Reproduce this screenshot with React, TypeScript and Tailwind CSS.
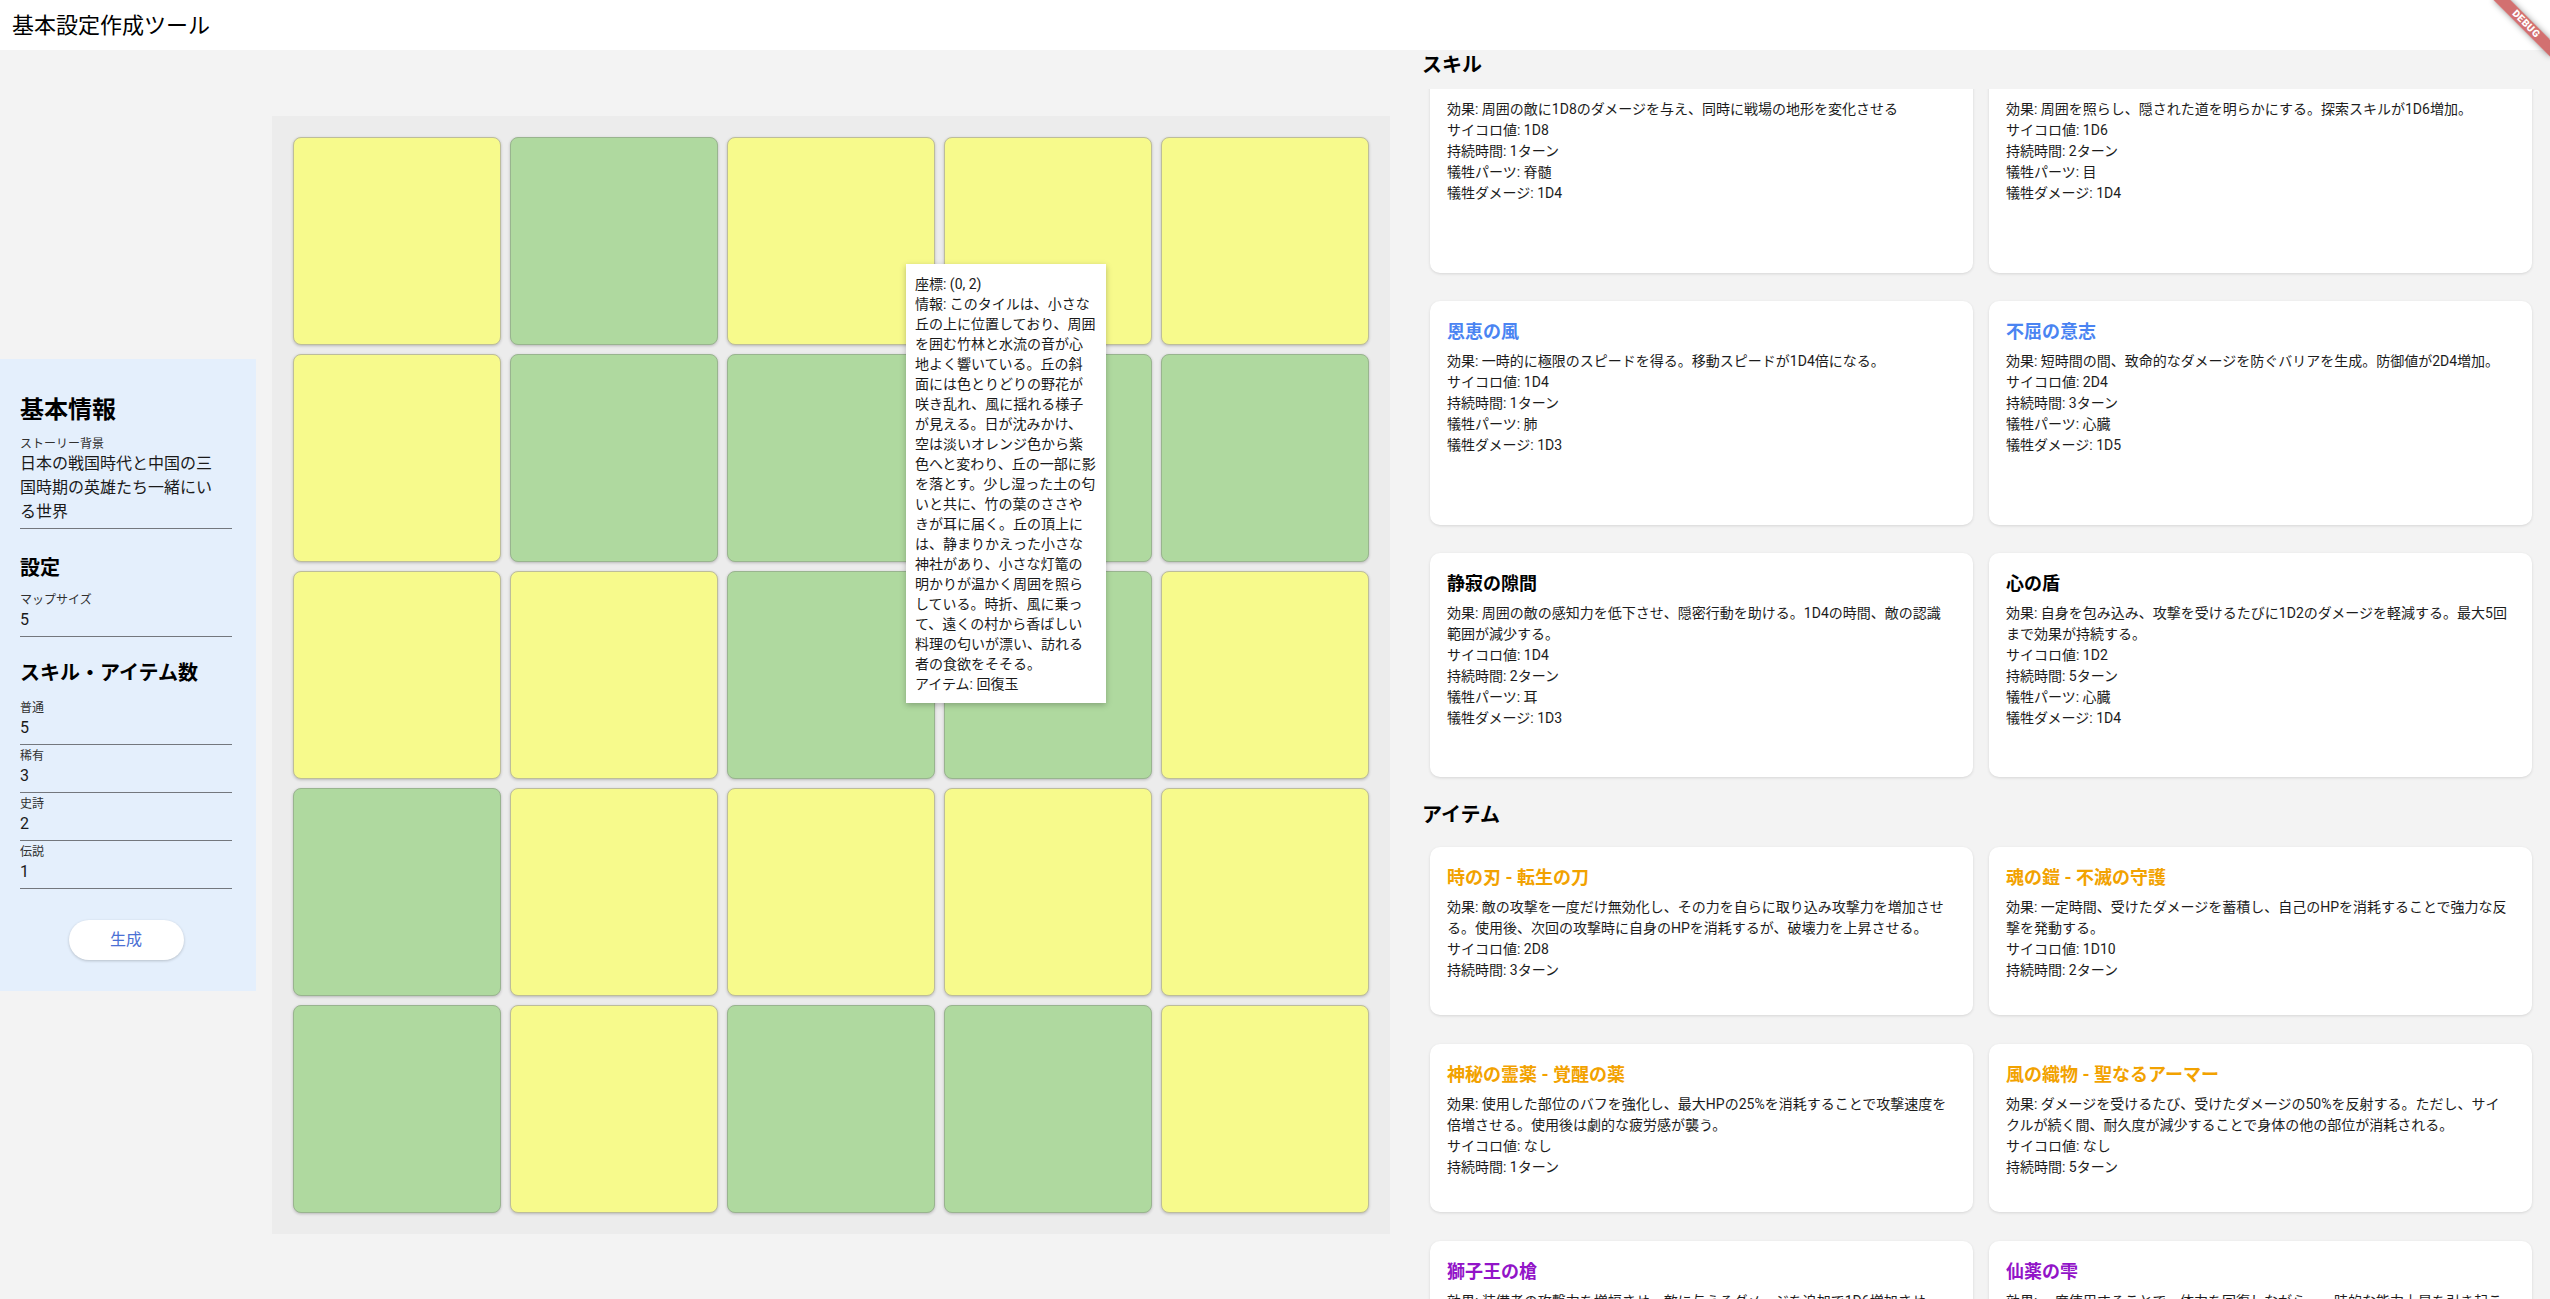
import React from "react";

type Tone = "Y" | "G";

const tiles: Tone[][] = [
  ["Y", "G", "Y", "Y", "Y"],
  ["Y", "G", "G", "G", "G"],
  ["Y", "Y", "G", "G", "Y"],
  ["G", "Y", "Y", "Y", "Y"],
  ["G", "Y", "G", "G", "Y"],
];

type CardData = {
  title: string;
  color: string;
  lines: string[];
};

const skills: CardData[] = [
  {
    title: "",
    color: "text-black",
    lines: [
      "効果: 周囲の敵に1D8のダメージを与え、同時に戦場の地形を変化させる",
      "サイコロ値: 1D8",
      "持続時間: 1ターン",
      "犠牲パーツ: 脊髄",
      "犠牲ダメージ: 1D4",
    ],
  },
  {
    title: "",
    color: "text-black",
    lines: [
      "効果: 周囲を照らし、隠された道を明らかにする。探索スキルが1D6増加。",
      "サイコロ値: 1D6",
      "持続時間: 2ターン",
      "犠牲パーツ: 目",
      "犠牲ダメージ: 1D4",
    ],
  },
  {
    title: "恩恵の風",
    color: "text-[#4a84f2]",
    lines: [
      "効果: 一時的に極限のスピードを得る。移動スピードが1D4倍になる。",
      "サイコロ値: 1D4",
      "持続時間: 1ターン",
      "犠牲パーツ: 肺",
      "犠牲ダメージ: 1D3",
    ],
  },
  {
    title: "不屈の意志",
    color: "text-[#4a84f2]",
    lines: [
      "効果: 短時間の間、致命的なダメージを防ぐバリアを生成。防御値が2D4増加。",
      "サイコロ値: 2D4",
      "持続時間: 3ターン",
      "犠牲パーツ: 心臓",
      "犠牲ダメージ: 1D5",
    ],
  },
  {
    title: "静寂の隙間",
    color: "text-black",
    lines: [
      "効果: 周囲の敵の感知力を低下させ、隠密行動を助ける。1D4の時間、敵の認識",
      "範囲が減少する。",
      "サイコロ値: 1D4",
      "持続時間: 2ターン",
      "犠牲パーツ: 耳",
      "犠牲ダメージ: 1D3",
    ],
  },
  {
    title: "心の盾",
    color: "text-black",
    lines: [
      "効果: 自身を包み込み、攻撃を受けるたびに1D2のダメージを軽減する。最大5回",
      "まで効果が持続する。",
      "サイコロ値: 1D2",
      "持続時間: 5ターン",
      "犠牲パーツ: 心臓",
      "犠牲ダメージ: 1D4",
    ],
  },
];

const items: CardData[] = [
  {
    title: "時の刃 - 転生の刀",
    color: "text-[#f2a200]",
    lines: [
      "効果: 敵の攻撃を一度だけ無効化し、その力を自らに取り込み攻撃力を増加させ",
      "る。使用後、次回の攻撃時に自身のHPを消耗するが、破壊力を上昇させる。",
      "サイコロ値: 2D8",
      "持続時間: 3ターン",
    ],
  },
  {
    title: "魂の鎧 - 不滅の守護",
    color: "text-[#f2a200]",
    lines: [
      "効果: 一定時間、受けたダメージを蓄積し、自己のHPを消耗することで強力な反",
      "撃を発動する。",
      "サイコロ値: 1D10",
      "持続時間: 2ターン",
    ],
  },
  {
    title: "神秘の霊薬 - 覚醒の薬",
    color: "text-[#f2a200]",
    lines: [
      "効果: 使用した部位のバフを強化し、最大HPの25%を消耗することで攻撃速度を",
      "倍増させる。使用後は劇的な疲労感が襲う。",
      "サイコロ値: なし",
      "持続時間: 1ターン",
    ],
  },
  {
    title: "風の織物 - 聖なるアーマー",
    color: "text-[#f2a200]",
    lines: [
      "効果: ダメージを受けるたび、受けたダメージの50%を反射する。ただし、サイ",
      "クルが続く間、耐久度が減少することで身体の他の部位が消耗される。",
      "サイコロ値: なし",
      "持続時間: 5ターン",
    ],
  },
  {
    title: "獅子王の槍",
    color: "text-[#9214c8]",
    lines: [
      "効果: 装備者の攻撃力を増幅させ、敵に与えるダメージを追加で1D6増加させ",
      "る。",
      "サイコロ値: 1D6",
      "持続時間: 3ターン",
    ],
  },
  {
    title: "仙薬の雫",
    color: "text-[#9214c8]",
    lines: [
      "効果: 一度使用することで、体力を回復しながら、一時的な能力上昇を引き起こ",
      "す。",
      "サイコロ値: 1D4",
      "持続時間: 2ターン",
    ],
  },
];

const tooltipLines = [
  "座標: (0, 2)",
  "情報: このタイルは、小さな",
  "丘の上に位置しており、周囲",
  "を囲む竹林と水流の音が心",
  "地よく響いている。丘の斜",
  "面には色とりどりの野花が",
  "咲き乱れ、風に揺れる様子",
  "が見える。日が沈みかけ、",
  "空は淡いオレンジ色から紫",
  "色へと変わり、丘の一部に影",
  "を落とす。少し湿った土の匂",
  "いと共に、竹の葉のささや",
  "きが耳に届く。丘の頂上に",
  "は、静まりかえった小さな",
  "神社があり、小さな灯篭の",
  "明かりが温かく周囲を照ら",
  "している。時折、風に乗っ",
  "て、遠くの村から香ばしい",
  "料理の匂いが漂い、訪れる",
  "者の食欲をそそる。",
  "アイテム: 回復玉",
];

function Field({
  label,
  lines,
  className,
}: {
  label: string;
  lines: string[];
  className: string;
}) {
  return (
    <div className={"border-b border-[#73777d] pb-[4px] " + className}>
      <div className="text-[12px] leading-[16px] text-[#303030]">{label}</div>
      {lines.map((l, i) => (
        <div key={i} className="whitespace-nowrap text-[16px] leading-[24px] text-[#1a1a1a]">
          {l}
        </div>
      ))}
    </div>
  );
}

function LeftPanel() {
  return (
    <div className="w-[256px] shrink-0 bg-[#e4effc] pb-[31px] pl-[20px] pr-[24px] pt-[35px]">
      <h2 className="text-[24px] font-bold leading-[32px]">基本情報</h2>
      <Field
        label="ストーリー背景"
        lines={["日本の戦国時代と中国の三", "国時期の英雄たち一緒にい", "る世界"]}
        className="mt-[10px]"
      />
      <h3 className="mt-[25px] text-[20px] font-bold leading-[28px]">設定</h3>
      <Field label="マップサイズ" lines={["5"]} className="mt-[10px]" />
      <h3 className="mt-[22px] text-[20px] font-bold leading-[28px]">スキル・アイテム数</h3>
      <Field label="普通" lines={["5"]} className="mt-[13px]" />
      <Field label="稀有" lines={["3"]} className="mt-[3px]" />
      <Field label="史詩" lines={["2"]} className="mt-[3px]" />
      <Field label="伝説" lines={["1"]} className="mt-[3px]" />
      <div className="mt-[31px] flex justify-center">
        <button className="h-[40px] w-[115px] rounded-full bg-white text-[16px] text-[#4b70d4] shadow-[0_1px_3px_rgba(0,0,0,0.2)]">
          生成
        </button>
      </div>
    </div>
  );
}

function MapGrid() {
  return (
    <div className="ml-[16px] grid h-[1118px] w-[1118px] shrink-0 grid-cols-5 grid-rows-5 gap-[9px] bg-[#ececec] p-[21px]">
      {tiles.flat().map((t, i) => (
        <div
          key={i}
          className={
            t === "Y"
              ? "rounded-[8px] border border-[#bdbd9a] bg-[#f7fa8c] shadow-[0_1px_3px_rgba(0,0,0,0.22)]"
              : "rounded-[8px] border border-[#99b48f] bg-[#afd99f] shadow-[0_1px_3px_rgba(0,0,0,0.22)]"
          }
        />
      ))}
    </div>
  );
}

function InfoCard({ card, height }: { card: CardData; height: string }) {
  return (
    <div
      className={
        "overflow-hidden rounded-[10px] bg-white px-[17px] pt-[17px] shadow-[0_1px_3px_rgba(0,0,0,0.12)] " +
        height
      }
    >
      <div className={"h-[27px] whitespace-nowrap text-[18px] font-bold leading-[27px] " + card.color}>
        {card.title}
      </div>
      <div className="mt-[6px] text-[14px] leading-[21px] text-[#1c1c1c]">
        {card.lines.map((l, i) => (
          <div key={i} className="whitespace-nowrap">
            {l}
          </div>
        ))}
      </div>
    </div>
  );
}

function RightColumn() {
  return (
    <div className="ml-[16px] flex h-full w-[1144px] shrink-0 flex-col self-stretch">
      <div className="h-[39px] shrink-0 pl-[16px] pt-[1px] text-[20px] font-bold leading-[28px]">スキル</div>
      <div className="h-[711px] shrink-0 overflow-hidden">
        <div className="-mt-[40px] grid grid-cols-2 gap-x-[16px] gap-y-[28px] pl-[24px] pr-[18px]">
          {skills.map((c, i) => (
            <InfoCard key={i} card={c} height="h-[224px]" />
          ))}
        </div>
      </div>
      <div className="h-[39px] shrink-0 pl-[16px] pt-[1px] text-[20px] font-bold leading-[28px]">アイテム</div>
      <div className="min-h-0 flex-1 overflow-hidden pt-[8px]">
        <div className="grid grid-cols-2 gap-x-[16px] gap-y-[29px] pl-[24px] pr-[18px]">
          {items.map((c, i) => (
            <InfoCard key={i} card={c} height="h-[168px]" />
          ))}
        </div>
      </div>
    </div>
  );
}

export default function App() {
  return (
    <div className="relative flex h-screen w-full flex-col overflow-hidden bg-[#f3f3f3] font-[Roboto,'Noto_Sans_CJK_JP',sans-serif] text-black">
      <header className="flex h-[50px] shrink-0 items-center bg-white pl-[12px] text-[22px] text-black">
        基本設定作成ツール
      </header>
      <main className="flex min-h-0 flex-1 items-center">
        <LeftPanel />
        <MapGrid />
        <RightColumn />
      </main>

      <div className="absolute left-[906px] top-[264px] w-[200px] bg-white pb-[9px] pl-[9px] pr-[6px] pt-[10px] text-[14px] leading-[20px] text-[#1a1a1a] shadow-[0_2px_6px_rgba(0,0,0,0.25)]">
        {tooltipLines.map((l, i) => (
          <div key={i} className="whitespace-nowrap">
            {l}
          </div>
        ))}
      </div>

      <div className="pointer-events-none absolute right-[-16px] top-[18px] h-[12px] w-[80px] rotate-45 bg-[#b71c1c]/[0.63] text-center text-[10px] font-black leading-[12px] tracking-[0.5px] text-white shadow-[0_0_6px_rgba(0,0,0,0.4)]">
        DEBUG
      </div>
    </div>
  );
}
